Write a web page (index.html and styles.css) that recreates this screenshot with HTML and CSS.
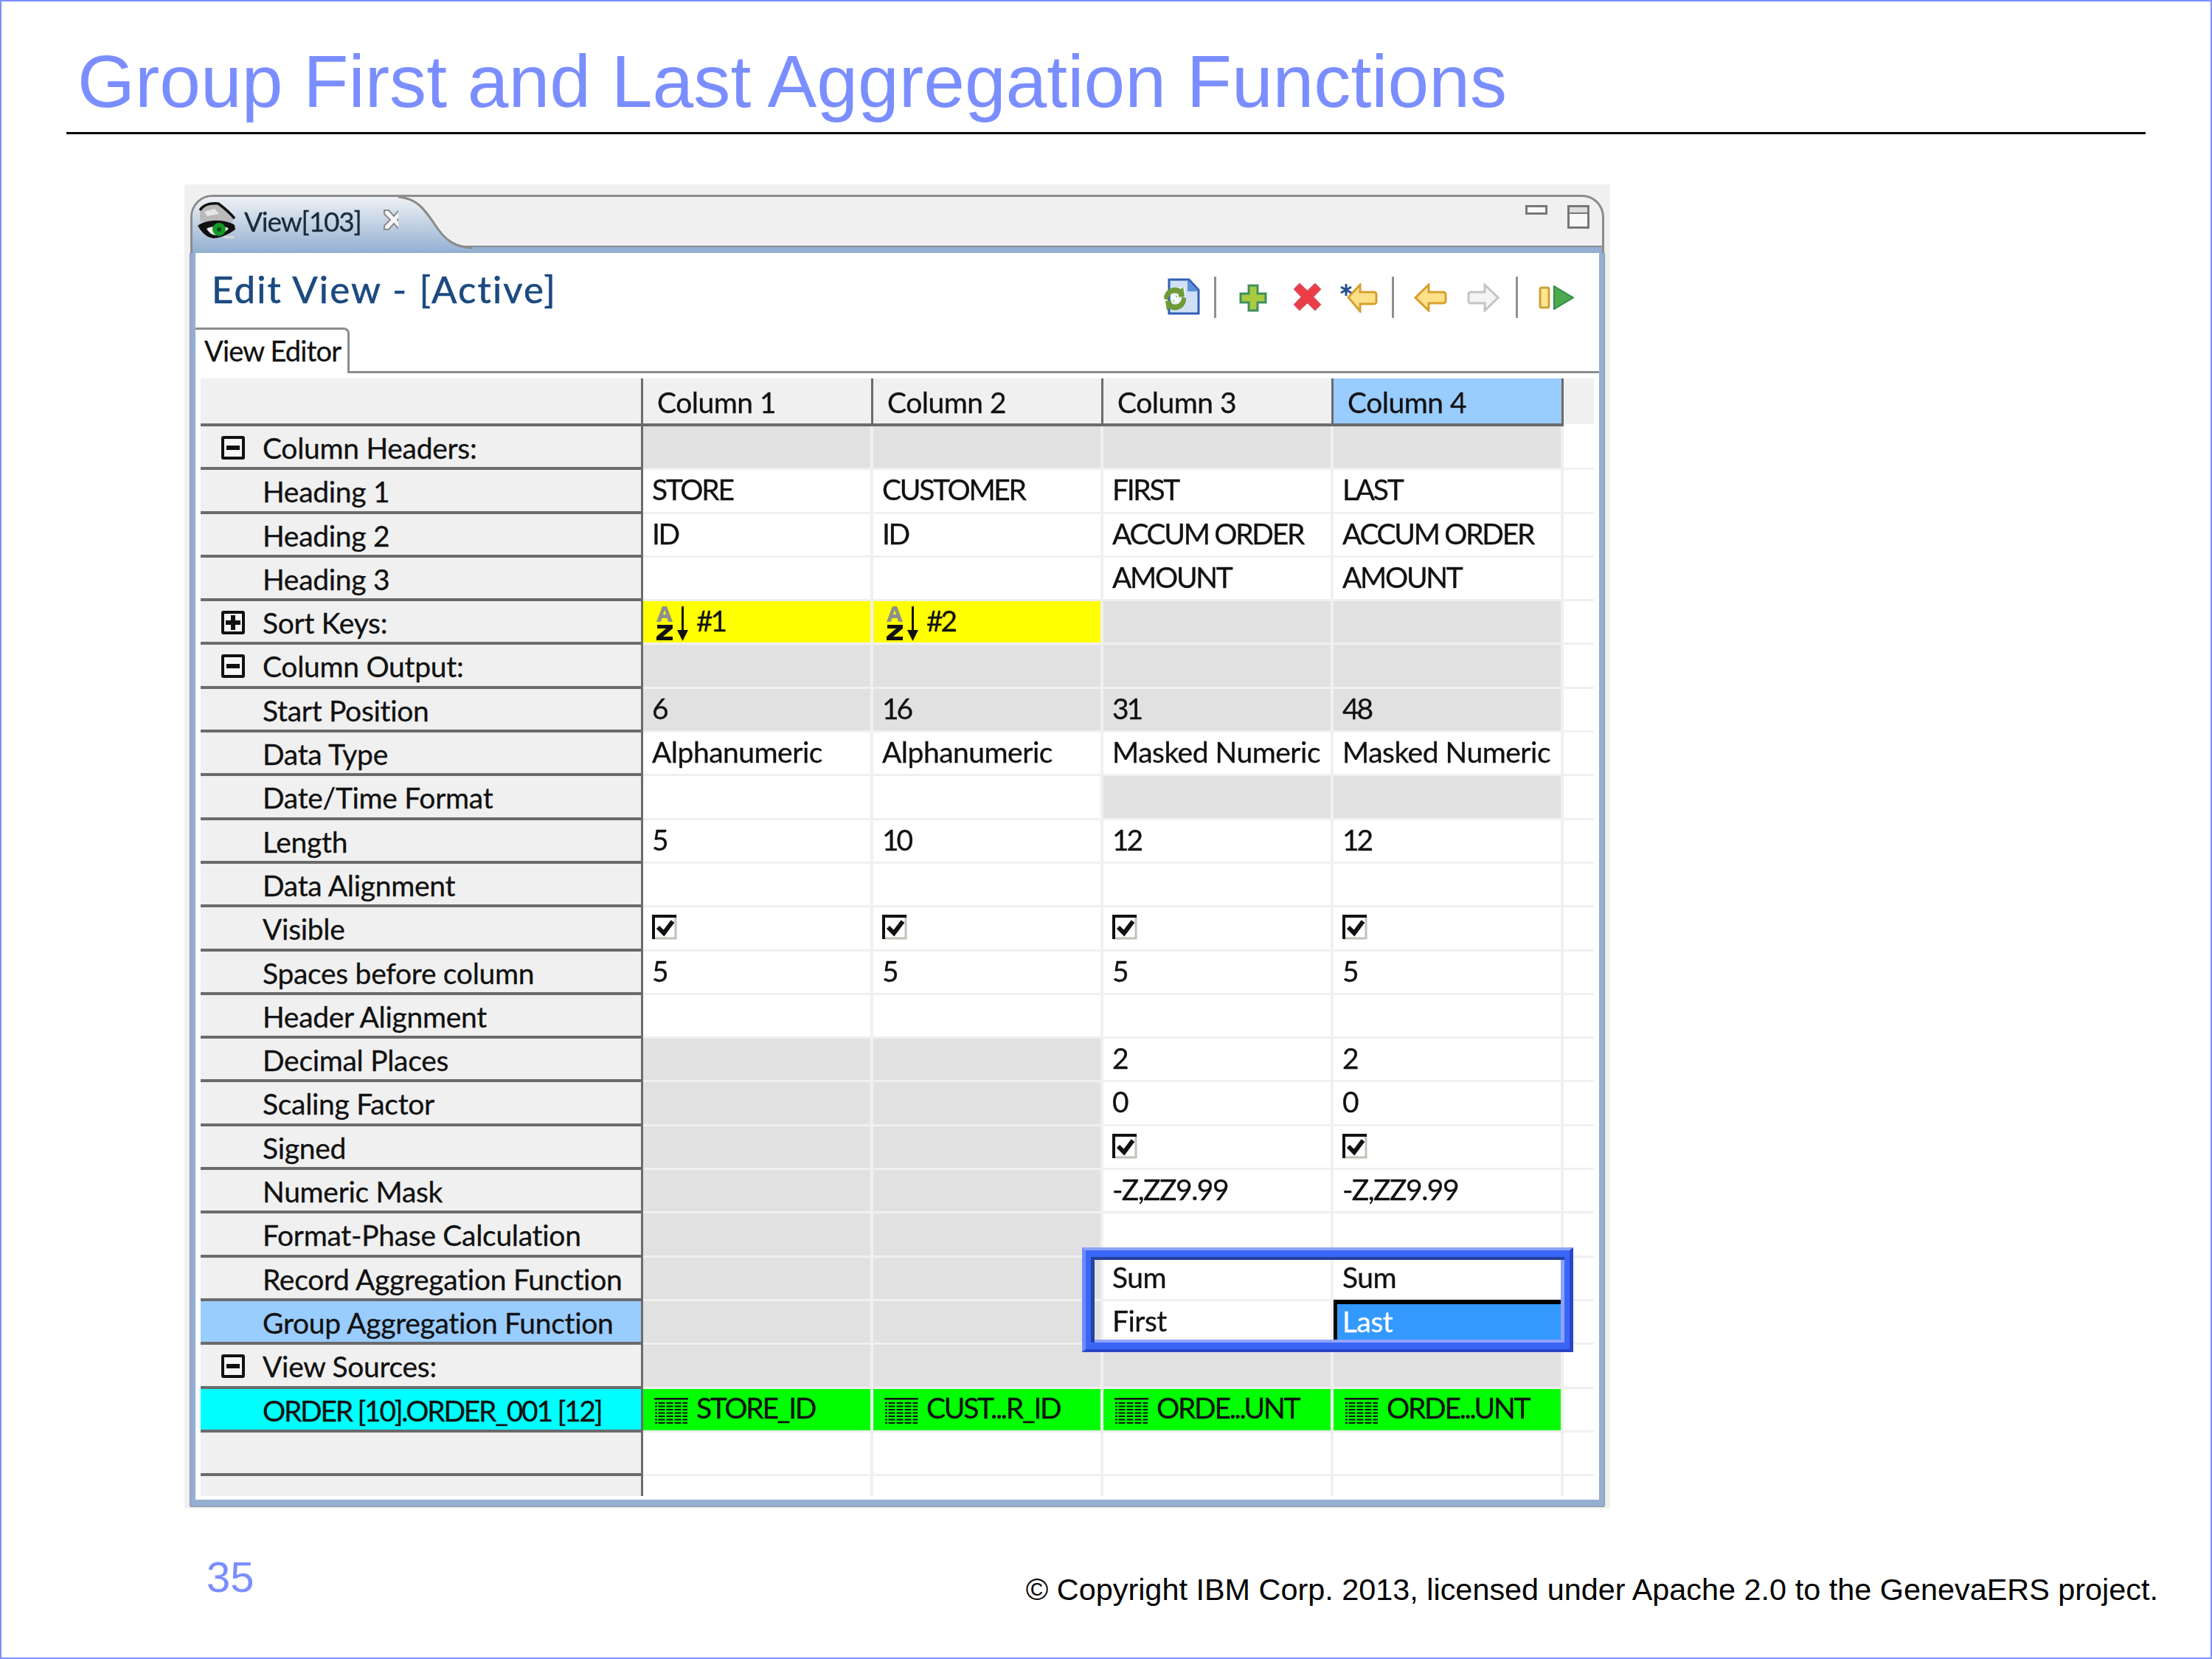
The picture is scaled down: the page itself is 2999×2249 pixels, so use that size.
FILE: index.html
```html
<!DOCTYPE html>
<html lang="en">
<head>
<meta charset="utf-8">
<title>Group First and Last Aggregation Functions</title>
<link rel="stylesheet" href="styles.css">
</head>
<body>
<svg class="defs" width="0" height="0" aria-hidden="true">
  <defs>
    <symbol id="i-check" viewBox="0 0 34 34"><rect x="1" y="1" width="32" height="32" fill="#fff"/><path d="M32 2v30H2" fill="none" stroke="#c2c2b8" stroke-width="3"/><path d="M2 33V2h31" fill="none" stroke="#111" stroke-width="4"/><path d="M8 17l8 8 12-16" fill="none" stroke="#111" stroke-width="6"/></symbol>
    <symbol id="i-minus" viewBox="0 0 32 32"><rect x="2" y="2" width="28" height="28" rx="1" fill="#f6f6f6" stroke="#111" stroke-width="4"/><rect x="7" y="13" width="18" height="6" fill="#111"/></symbol>
    <symbol id="i-plus" viewBox="0 0 32 32"><rect x="2" y="2" width="28" height="28" rx="1" fill="#f6f6f6" stroke="#111" stroke-width="4"/><path d="M13 6h6v7h7v6h-7v7h-6v-7H6v-6h7z" fill="#111"/></symbol>
    <symbol id="i-grid" viewBox="0 0 46 36"><rect x="0" y="0" width="46" height="2.500" fill="#111"/><path d="M1 7h44M1 11.500h44M1 16h44M1 20.500h44M1 25h44M1 29.500h44M1 34h44" stroke="#111" stroke-width="2" stroke-dasharray="3 1.500 9 2 9 2 9 2 9"/></symbol>
    <symbol id="i-sort" viewBox="0 0 46 48"><path d="M1 22L9 1h6l8 21h-6l-1.500-5h-7L7 22zM10 12h4l-2-6z" fill="#8f8f8f" fill-rule="evenodd"/><path d="M2 26h21v5L10 42h13v5H1v-5l13-11H2z" fill="#111"/><rect x="35" y="1" width="3" height="36" fill="#111"/><path d="M29 33h15l-7.500 15z" fill="#111"/></symbol>
  </defs>
</svg>

<main class="slide">
  <h1 class="slide-title">Group First and Last Aggregation Functions</h1>
  <hr class="slide-rule">

  <section class="panel">
    <div class="window">
      <div class="strip">
        <div class="view-tab">
          <svg class="eye" viewBox="0 0 51 51" width="51" height="51" aria-hidden="true">
            <path d="M3 12L12 3h16l22 20-6 6L3 26z" fill="#b9b9b9"/>
            <path d="M9 13l14-4 6 7-16 3z" fill="#e6e6e6"/>
            <path d="M3 11C8 3 18 1 28 2c7 5 15 12 22 20" fill="none" stroke="#111" stroke-width="3.500"/>
            <path d="M0 32C10 24 35 22 50 31l1 6c-8 6-20 12-30 12C10 47 5 40 0 32z" fill="#111"/>
            <path d="M12 36c8-4 22-5 30 0-5 5-11 9-17 9-5 0-10-4-13-9z" fill="#f2f2f2"/>
            <circle cx="29" cy="37" r="9" fill="#159a26"/>
            <circle cx="29" cy="37" r="3" fill="#0a4a14"/>
            <path d="M35 46h15v3H35z" fill="#d8d8d8"/>
          </svg>
          <span class="view-tab-label">View[103]</span>
          <svg class="tab-close" viewBox="0 0 32 32" width="32" height="32" aria-hidden="true">
            <path d="M3 3h6l7 8 7-8h6v5l-8 8 8 8v5h-6l-7-8-7 8H3v-5l8-8-8-8z" fill="#f6f6f6" stroke="#8a8a8a" stroke-width="2"/>
          </svg>
        </div>
        <svg class="tab-tail" viewBox="0 0 100 76" width="100" height="76" preserveAspectRatio="none" aria-hidden="true">
          <defs><linearGradient id="tabfill" x1="0" y1="0" x2="0" y2="1"><stop offset="0" stop-color="#f0f2f5"/><stop offset="1" stop-color="#92afd1"/></linearGradient></defs>
          <path d="M0 0C24 2 34 14 50 38c14 22 28 30 50 31v7H0z" fill="url(#tabfill)"/>
          <path d="M0 0C24 2 34 14 50 38c14 22 28 30 50 31" fill="none" stroke="#8a8a8a" stroke-width="3"/>
        </svg>
        <div class="win-buttons">
          <span class="btn-min"></span>
          <span class="btn-max"></span>
        </div>
      </div>

      <div class="body">
        <div class="head">
          <h2 class="edit-title">Edit View - [Active]</h2>
          <div class="toolbar">
            <svg class="tb tb-doc" viewBox="0 0 50 50" width="50" height="50" aria-hidden="true">
              <path d="M8 2h27l13 14v32H8z" fill="#cfe0f6" stroke="#2f5fb5" stroke-width="3"/>
              <path d="M33 2v16h15z" fill="#5d8fd8"/>
              <path d="M12 12h18v26H12z" fill="#e6f0fb"/>
              <path d="M1 28a15 15 0 0 1 23-13l3-3 2 13-12 1 4-4A9 9 0 0 0 7 30zM31 27a15 15 0 0 1-23 14l-3 3-2-13 12-1-4 4a9 9 0 0 0 14-9z" fill="#6f9a38"/>
              <path d="M12 33v-10l8 9v-10" fill="none" stroke="#fff" stroke-width="2"/>
            </svg>
            <span class="tb-sep tb-sep-1"></span>
            <svg class="tb tb-plus" viewBox="0 0 38 38" width="38" height="38" aria-hidden="true">
              <path d="M13 2h12v11h11v12H25v11H13V25H2V13h11z" fill="#a9c93e" stroke="#3f9060" stroke-width="3"/>
            </svg>
            <svg class="tb tb-x" viewBox="0 0 39 39" width="39" height="39" aria-hidden="true">
              <path d="M2 9l7-7 10.500 10L30 2l7 7-10 10.500L37 30l-7 7-10.500-10L9 37l-7-7 10-10.500z" fill="#ee3c46" stroke="#d9485a" stroke-width="2"/>
            </svg>
            <svg class="tb tb-star" viewBox="0 0 51 40" width="51" height="40" aria-hidden="true">
              <path d="M27 2L11 19l16 19V28h19a3 3 0 0 0 3-3V15a3 3 0 0 0-3-3H27z" fill="#ffe08a" stroke="#d7a02c" stroke-width="3"/>
              <path d="M8 1v16M1 5l14 8M1 13l14-8" stroke="#24508f" stroke-width="3"/>
            </svg>
            <span class="tb-sep tb-sep-2"></span>
            <svg class="tb tb-left" viewBox="0 0 45 39" width="45" height="39" aria-hidden="true">
              <path d="M20 2L2 19.500 20 37V27h20a3 3 0 0 0 3-3V15a3 3 0 0 0-3-3H20z" fill="#ffe08a" stroke="#d7a02c" stroke-width="3"/>
            </svg>
            <svg class="tb tb-right" viewBox="0 0 44 39" width="44" height="39" aria-hidden="true">
              <path d="M24 2l18 17.500L24 37V27H5a3 3 0 0 1-3-3V15a3 3 0 0 1 3-3h19z" fill="#f4f4f4" stroke="#c4c4c4" stroke-width="3"/>
            </svg>
            <span class="tb-sep tb-sep-3"></span>
            <svg class="tb tb-run" viewBox="0 0 48 33" width="48" height="33" aria-hidden="true">
              <rect x="2" y="3" width="12" height="27" rx="2" fill="#ffe58f" stroke="#c9a33a" stroke-width="3"/>
              <path d="M21 1l26 15.500L21 32z" fill="#4caa4c" stroke="#2c8c4a" stroke-width="2"/>
            </svg>
          </div>
        </div>
        <div class="tabs"><div class="tab-editor">View Editor</div></div>

        <div class="sheet">
          <div class="lbl"></div><div class="hdr">Column 1</div><div class="hdr">Column 2</div><div class="hdr">Column 3</div><div class="hdr hdr-on">Column 4</div><div class="hdr-end"></div>

          <div class="lbl"><svg class="tree"><use href="#i-minus"/></svg>Column Headers:</div><div class="c g"></div><div class="c g"></div><div class="c g"></div><div class="c g"></div><div class="end"></div>
          <div class="lbl">Heading 1</div><div class="c u">STORE</div><div class="c u">CUSTOMER</div><div class="c u">FIRST</div><div class="c u">LAST</div><div class="end"></div>
          <div class="lbl">Heading 2</div><div class="c u">ID</div><div class="c u">ID</div><div class="c u">ACCUM ORDER</div><div class="c u">ACCUM ORDER</div><div class="end"></div>
          <div class="lbl">Heading 3</div><div class="c"></div><div class="c"></div><div class="c u">AMOUNT</div><div class="c u">AMOUNT</div><div class="end"></div>
          <div class="lbl"><svg class="tree"><use href="#i-plus"/></svg>Sort Keys:</div><div class="c y n"><svg class="sort"><use href="#i-sort"/></svg>#1</div><div class="c y n"><svg class="sort"><use href="#i-sort"/></svg>#2</div><div class="c g"></div><div class="c g"></div><div class="end"></div>
          <div class="lbl"><svg class="tree"><use href="#i-minus"/></svg>Column Output:</div><div class="c g"></div><div class="c g"></div><div class="c g"></div><div class="c g"></div><div class="end"></div>
          <div class="lbl">Start Position</div><div class="c g n">6</div><div class="c g n">16</div><div class="c g n">31</div><div class="c g n">48</div><div class="end"></div>
          <div class="lbl">Data Type</div><div class="c">Alphanumeric</div><div class="c">Alphanumeric</div><div class="c">Masked Numeric</div><div class="c">Masked Numeric</div><div class="end"></div>
          <div class="lbl">Date/Time Format</div><div class="c"></div><div class="c"></div><div class="c g"></div><div class="c g"></div><div class="end"></div>
          <div class="lbl">Length</div><div class="c n">5</div><div class="c n">10</div><div class="c n">12</div><div class="c n">12</div><div class="end"></div>
          <div class="lbl">Data Alignment</div><div class="c"></div><div class="c"></div><div class="c"></div><div class="c"></div><div class="end"></div>
          <div class="lbl">Visible</div><div class="c"><svg class="check"><use href="#i-check"/></svg></div><div class="c"><svg class="check"><use href="#i-check"/></svg></div><div class="c"><svg class="check"><use href="#i-check"/></svg></div><div class="c"><svg class="check"><use href="#i-check"/></svg></div><div class="end"></div>
          <div class="lbl">Spaces before column</div><div class="c n">5</div><div class="c n">5</div><div class="c n">5</div><div class="c n">5</div><div class="end"></div>
          <div class="lbl">Header Alignment</div><div class="c"></div><div class="c"></div><div class="c"></div><div class="c"></div><div class="end"></div>
          <div class="lbl">Decimal Places</div><div class="c g"></div><div class="c g"></div><div class="c n">2</div><div class="c n">2</div><div class="end"></div>
          <div class="lbl">Scaling Factor</div><div class="c g"></div><div class="c g"></div><div class="c n">0</div><div class="c n">0</div><div class="end"></div>
          <div class="lbl">Signed</div><div class="c g"></div><div class="c g"></div><div class="c"><svg class="check"><use href="#i-check"/></svg></div><div class="c"><svg class="check"><use href="#i-check"/></svg></div><div class="end"></div>
          <div class="lbl">Numeric Mask</div><div class="c g"></div><div class="c g"></div><div class="c m">-Z,ZZ9.99</div><div class="c m">-Z,ZZ9.99</div><div class="end"></div>
          <div class="lbl">Format-Phase Calculation</div><div class="c g"></div><div class="c g"></div><div class="c"></div><div class="c"></div><div class="end"></div>
          <div class="lbl">Record Aggregation Function</div><div class="c g"></div><div class="c g"></div><div class="c">Sum</div><div class="c">Sum</div><div class="end"></div>
          <div class="lbl lbl-on">Group Aggregation Function</div><div class="c g"></div><div class="c g"></div><div class="c">First</div><div class="c c-sel">Last</div><div class="end"></div>
          <div class="lbl"><svg class="tree"><use href="#i-minus"/></svg>View Sources:</div><div class="c g"></div><div class="c g"></div><div class="c g"></div><div class="c g"></div><div class="end"></div>
          <div class="lbl lbl-src">ORDER [10].ORDER_001 [12]</div><div class="c v u"><svg class="grid-i"><use href="#i-grid"/></svg>STORE_ID</div><div class="c v u"><svg class="grid-i"><use href="#i-grid"/></svg>CUST...R_ID</div><div class="c v u"><svg class="grid-i"><use href="#i-grid"/></svg>ORDE...UNT</div><div class="c v u"><svg class="grid-i"><use href="#i-grid"/></svg>ORDE...UNT</div><div class="end"></div>
          <div class="lbl"></div><div class="c"></div><div class="c"></div><div class="c"></div><div class="c"></div><div class="end"></div>
          <div class="lbl lbl-last"></div><div class="c c-last"></div><div class="c c-last"></div><div class="c c-last"></div><div class="c c-last"></div><div class="end end-last"></div>

          <div class="callout" aria-hidden="true"></div>
        </div>
      </div>
    </div>
  </section>

  <footer class="foot">
    <span class="page-no">35</span>
    <span class="copyright">© Copyright IBM Corp. 2013, licensed under Apache 2.0 to the GenevaERS project.</span>
  </footer>
</main>
</body>
</html>
```
FILE: styles.css
```css
* { box-sizing: border-box; }
html, body { margin: 0; padding: 0; background: #fff; }
.defs { position: absolute; }
.slide {
  width: 2999px;
  height: 2249px;
  border: 2px solid #7b8eff;
  display: flex;
  flex-direction: column;
  font-family: "Liberation Sans", Arial, sans-serif;
}
.slide-title {
  margin: 0 0 0 103px;
  height: 177px;
  padding-top: 49px;
  font-size: 100.2px;
  line-height: 118px;
  font-weight: 400;
  color: #7b8eff;
}
.slide-rule {
  margin: 0 88px 0 88px;
  width: 2819px;
  height: 3px;
  border: 0;
  background: #000;
}
.panel {
  margin: 68px 0 0 248px;
  width: 1933px;
  height: 1795px;
  padding: 14px 8px 3px;
  background: #f0f0f0;
}
.window {
  height: 100%;
  display: flex;
  flex-direction: column;
  font-family: Lato, "Open Sans", sans-serif;
  color: #111;
  font-size: 39px;
  letter-spacing: -0.5px;
  -webkit-text-stroke: 0.3px currentColor;
  filter: blur(0.6px);
}
.strip {
  height: 79px;
  flex: none;
  display: flex;
  border: 3px solid #8c8c8c;
  border-bottom: 0;
  border-radius: 30px 30px 0 0;
  background: #f0f0f0;
  position: relative;
  overflow: hidden;
}
.strip::after {
  content: "";
  position: absolute;
  left: 0;
  right: 0;
  bottom: 0;
  height: 8px;
  background: #94afd2;
  border-top: 2px solid #8a8f96;
}
.view-tab {
  flex: none;
  width: 279px;
  display: flex;
  align-items: flex-start;
  padding: 7px 0 0 7px;
  background: linear-gradient(#eef1f5, #92afd1);
  position: relative;
  z-index: 1;
}
.eye { flex: none; }
.view-tab-label {
  flex: none;
  margin-left: 12px;
  line-height: 52px;
  font-size: 37px;
  letter-spacing: -1.2px;
  color: #1a2a3a;
}
.tab-close { flex: none; margin: 8px 0 0 28px; position: relative; z-index: 2; }
.tab-tail { flex: none; position: relative; z-index: 1; }
.win-buttons {
  margin-left: auto;
  display: flex;
  align-items: flex-start;
  gap: 27px;
  padding: 11px 17px 0 0;
}
.btn-min { width: 30px; height: 13px; border: 3px solid #777; background: #f8f8f8; }
.btn-max { width: 30px; height: 32px; border: 3px solid #777; background: linear-gradient(#ddd 7px, #777 7px, #777 9px, #f8f8f8 9px); }

.body {
  flex: 1;
  min-height: 0;
  border: solid #94afd2;
  border-width: 0 7px 9px 7px;
  background: #fff;
  display: flex;
  flex-direction: column;
  box-shadow: -1px 0 0 #8a9199, 1px 0 0 #8a9199, 0 1px 0 #8a9199;
}
.head {
  height: 101px;
  flex: none;
  display: flex;
  justify-content: space-between;
  padding-left: 22px;
}
.edit-title {
  margin: 0;
  padding-top: 14px;
  font-size: 51px;
  line-height: 70px;
  letter-spacing: 2.1px;
  font-weight: 400;
  color: #1b4a80;
  -webkit-text-stroke: 0.6px currentColor;
}
.toolbar {
  display: flex;
  align-items: flex-start;
  padding: 34px 34px 0 0;
}
.tb { flex: none; }
.tb-sep { width: 3px; height: 56px; margin-top: -2px; background: #8f8f8f; flex: none; }
.tb-sep-1 { margin-left: 19px; }
.tb-plus { margin: 8px 0 0 31px; }
.tb-x { margin: 6px 0 0 35px; }
.tb-star { margin: 7px 0 0 25px; }
.tb-sep-2 { margin-left: 19px; }
.tb-left { margin: 7px 0 0 27px; }
.tb-right { margin: 7px 0 0 27px; }
.tb-sep-3 { margin-left: 22px; }
.tb-run { margin: 10px 0 0 28px; }

.tabs {
  height: 62px;
  flex: none;
  border-bottom: 3px solid #8c8c8c;
}
.tab-editor {
  width: 209px;
  height: 62px;
  border: 3px solid #8c8c8c;
  border-left: 0;
  border-bottom: 0;
  border-radius: 0 8px 0 0;
  background: #fff;
  padding-left: 12px;
  line-height: 56px;
  font-size: 38px;
  letter-spacing: -0.8px;
}

.sheet {
  position: relative;
  margin: 7px 0 0 7px;
  display: grid;
  grid-template-columns: 600px repeat(4, 312px) 41px;
  grid-template-rows: 65px repeat(24, 59.3px) 27px;
}
.lbl {
  background: #f0f0f0;
  border-bottom: 4px solid #6b6b6b;
  border-right: 3px solid #6b6b6b;
  padding-left: 84px;
  line-height: 59px;
  letter-spacing: -0.3px;
  position: relative;
  white-space: nowrap;
}
.lbl-on { background: #99ccff; }
.lbl-src { background: #00ffff; letter-spacing: -2.3px; }
.lbl-last { border-bottom: 0; }
.tree {
  position: absolute;
  left: 28px;
  top: 13px;
  width: 32px;
  height: 32px;
}
.hdr {
  background: #f0f0f0;
  border-bottom: 4px solid #6b6b6b;
  border-right: 3px solid #6b6b6b;
  padding-left: 19px;
  line-height: 65px;
  white-space: nowrap;
}
.hdr-on { background: #99ccff; }
.hdr-end { background: #f0f0f0; height: 62px; }
.c {
  border-right: 4px solid #f0f0f0;
  border-bottom: 3px solid #f0f0f0;
  padding-left: 12px;
  line-height: 52px;
  white-space: nowrap;
  display: flex;
  align-items: flex-start;
  background: #fff;
}
.g { background: #e1e1e1; }
.y { background: #ffff00; }
.v { background: #00ff00; line-height: 50px; }
.u { letter-spacing: -2.3px; }
.n { letter-spacing: -3px; }
.m { letter-spacing: -1.5px; }
.c-last { border-bottom: 0; }
.end { border-bottom: 3px solid #f0f0f0; }
.end-last { border-bottom: 0; }
.check { width: 34px; height: 34px; margin-top: 10px; flex: none; }
.sort { width: 46px; height: 48px; margin: 6px 9px 0 5px; flex: none; }
.grid-i { width: 46px; height: 36px; margin: 12px 11px 0 3px; flex: none; }
.c-sel {
  background: #3399ff;
  color: #fff;
  border: 0;
  border-top: 6px solid #000;
  border-left: 5px solid #000;
  margin-top: -2px;
  padding-left: 7px;
  line-height: 46px;
}
.callout {
  position: absolute;
  left: 1195px;
  top: 1178px;
  width: 666px;
  height: 142px;
  border: solid #3a66f8;
  border-width: 13px 12px;
  box-shadow: inset 5px 4px 0 #24429f, inset -5px -4px 0 #8fa3fb;
  pointer-events: none;
}
.callout::before {
  content: "";
  position: absolute;
  inset: -13px -12px;
  border-style: solid;
  border-width: 4px 5px;
  border-color: #8fa3fb #2a46c4 #2a46c4 #6f8cfb;
}
.foot {
  margin-top: auto;
  height: 146px;
  display: flex;
  justify-content: space-between;
  align-items: flex-start;
  padding: 0 71px 0 278px;
}
.page-no { font-size: 58px; line-height: 66px; color: #7b8eff; margin-top: 4px; }
.copyright { font-size: 41.4px; line-height: 48px; color: #000; margin-top: 30px; }
```
